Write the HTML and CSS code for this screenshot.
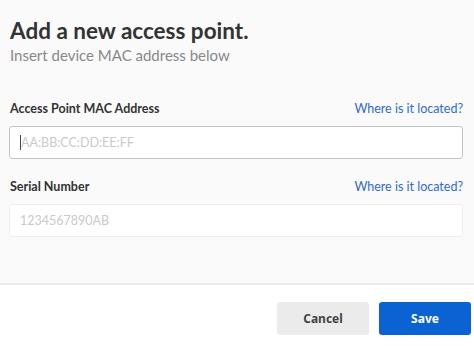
FILE: index.html
```html
<!DOCTYPE html>
<html lang="en">
<head>
<meta charset="UTF-8">
<title>Add access point</title>
<link rel="stylesheet" href="styles.css">
</head>
<body>
<div class="modal">
  <div class="modal-body">
    <h1 class="title">Add a new access point.</h1>
    <p class="subtitle">Insert device MAC address below</p>

    <div class="field field-first">
      <div class="field-head">
        <label class="field-label" for="mac">Access Point MAC Address</label>
        <a class="field-link" href="#">Where is it located?</a>
      </div>
      <div class="input input-focus">
        <span class="caret"></span>
        <span class="placeholder">AA:BB:CC:DD:EE:FF</span>
      </div>
    </div>

    <div class="field">
      <div class="field-head">
        <label class="field-label" for="serial">Serial Number</label>
        <a class="field-link" href="#">Where is it located?</a>
      </div>
      <div class="input">
        <span class="placeholder">1234567890AB</span>
      </div>
    </div>
  </div>

  <div class="modal-footer">
    <button class="btn btn-cancel">Cancel</button>
    <button class="btn btn-save">Save</button>
  </div>
</div>
</body>
</html>
```

FILE: styles.css
```css
*, *:before, *:after{
  box-sizing: border-box;
}
body{
  margin: 0;
  padding: 0;
  background: #fff;
  font-family: Lato, "Open Sans", sans-serif;
  color: #333;
}
.modal{
  width: 474px;
  height: 346px;
  display: flex;
  flex-direction: column;
}
.modal-body{
  background: #fafafa;
  height: 285px;
  padding: 17px 11px 0 9px;
  border-bottom: 2px solid #ececec;
}
.title{
  margin: 0 0 0 1px;
  font-size: 22.5px;
  line-height: 28px;
  font-weight: 700;
  color: #333;
}
.subtitle{
  margin: 0 0 0 1px;
  font-size: 15px;
  line-height: 20px;
  color: #888;
}

/* form fields */
.field-first{
  margin-top: 35px;
}
.field + .field{
  margin-top: 19px;
}
.field-head{
  display: flex;
  justify-content: space-between;
  align-items: baseline;
  padding-left: 1px;
  height: 18px;
  line-height: 18px;
}
.field-label{
  font-size: 12.5px;
  font-weight: 700;
  color: #333;
}
.field-link{
  font-size: 12.5px;
  color: #2f6ccf;
  text-decoration: none;
}
.input{
  margin-top: 8px;
  height: 33px;
  background: #fff;
  border: 1px solid #efefef;
  border-radius: 3px;
  display: flex;
  align-items: center;
  padding-left: 10px;
  font-size: 12.5px;
}
.input-focus{
  border: 1px solid #c4c4c4;
}
.caret{
  width: 1px;
  height: 15px;
  background: #444;
}
.placeholder{
  color: #cacaca;
}

/* footer */
.modal-footer{
  flex: 1;
  display: flex;
  justify-content: flex-end;
  align-items: flex-start;
  gap: 10px;
  padding: 17px 3px 0 0;
}
.btn{
  width: 92px;
  height: 33px;
  border: 0;
  border-radius: 3px;
  font-family: "Noto Sans", "Open Sans", sans-serif;
  font-weight: 700;
  font-size: 12px;
}
.btn-cancel{
  background: #ebebeb;
  color: #444;
}
.btn-save{
  background: #0b63d3;
  color: #fff;
}
```
